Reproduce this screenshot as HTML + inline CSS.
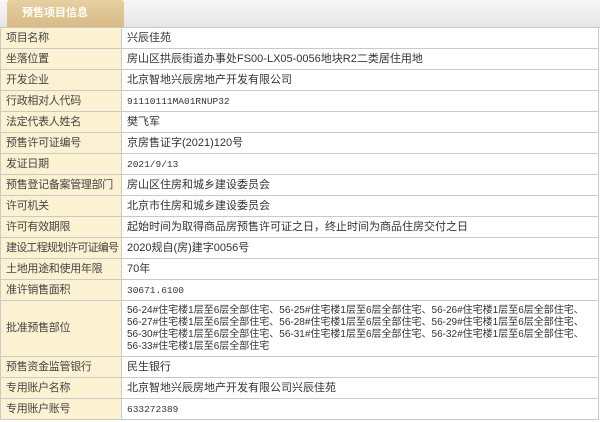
<!DOCTYPE html>
<html><head><meta charset="utf-8"><style>
body{margin:0;width:600px;height:422px;background:#fff;font-family:"Liberation Sans","Noto Sans CJK SC",sans-serif;font-size:11px;color:#333;overflow:hidden}
.hd{position:absolute;left:0;top:0;width:600px;height:27px;background:linear-gradient(#f7f7f7,#e6e6e6);border-bottom:1px solid #cfc6b0}
.tab{position:absolute;left:7px;top:0;width:117px;height:27px;background:linear-gradient(#e6cfa2,#d9bb84);color:#fff;font-weight:bold;font-size:11px;line-height:27px;padding-left:15px;box-sizing:border-box;border-radius:3px 3px 0 0}
table{position:absolute;left:0;top:27px;width:599px;border-collapse:collapse;table-layout:fixed}
td{border:1px solid #c9c9c9;height:20px;padding:0 0 0 5px;line-height:13px;white-space:nowrap;overflow:hidden}
td.l{background:#fcf1d1;color:#444;letter-spacing:-0.3px}
.m{font-size:9.5px;font-family:"Liberation Mono","Noto Sans CJK SC",monospace}
</style></head><body>
<div class="hd"></div><div class="tab">预售项目信息</div>
<table>
<col style="width:121px"><col>
<tr><td class="l">项目名称</td><td>兴辰佳苑</td></tr>
<tr><td class="l">坐落位置</td><td>房山区拱辰街道办事处FS00-LX05-0056地块R2二类居住用地</td></tr>
<tr><td class="l">开发企业</td><td>北京智地兴辰房地产开发有限公司</td></tr>
<tr><td class="l">行政相对人代码</td><td class="m">91110111MA01RNUP32</td></tr>
<tr><td class="l">法定代表人姓名</td><td>樊飞军</td></tr>
<tr><td class="l">预售许可证编号</td><td>京房售证字(2021)120号</td></tr>
<tr><td class="l">发证日期</td><td class="m">2021/9/13</td></tr>
<tr><td class="l">预售登记备案管理部门</td><td>房山区住房和城乡建设委员会</td></tr>
<tr><td class="l">许可机关</td><td>北京市住房和城乡建设委员会</td></tr>
<tr><td class="l">许可有效期限</td><td>起始时间为取得商品房预售许可证之日，终止时间为商品住房交付之日</td></tr>
<tr><td class="l" style="letter-spacing:-0.8px">建设工程规划许可证编号</td><td>2020规自(房)建字0056号</td></tr>
<tr><td class="l">土地用途和使用年限</td><td>70年</td></tr>
<tr><td class="l">准许销售面积</td><td class="m">30671.6100</td></tr>
<tr><td class="l" style="height:55px">批准预售部位</td><td style="font-size:10px;line-height:12px">56-24#住宅楼1层至6层全部住宅、56-25#住宅楼1层至6层全部住宅、56-26#住宅楼1层至6层全部住宅、<br>56-27#住宅楼1层至6层全部住宅、56-28#住宅楼1层至6层全部住宅、56-29#住宅楼1层至6层全部住宅、<br>56-30#住宅楼1层至6层全部住宅、56-31#住宅楼1层至6层全部住宅、56-32#住宅楼1层至6层全部住宅、<br>56-33#住宅楼1层至6层全部住宅</td></tr>
<tr><td class="l">预售资金监管银行</td><td>民生银行</td></tr>
<tr><td class="l">专用账户名称</td><td>北京智地兴辰房地产开发有限公司兴辰佳苑</td></tr>
<tr><td class="l">专用账户账号</td><td class="m">633272389</td></tr>
</table>
</body></html>
